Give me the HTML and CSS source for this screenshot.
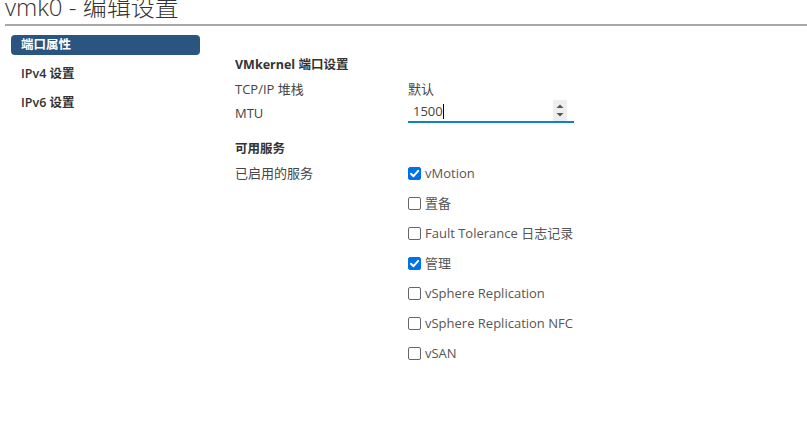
FILE: index.html
```html
<!DOCTYPE html>
<html>
<head>
<meta charset="utf-8">
<link rel="stylesheet" href="styles.css">
</head>
<body>
<div class="page">
  <h1 class="title">vmk0 - 编辑设置</h1>
  <div class="body">
    <nav class="side">
      <div class="nav-item active">端口属性</div>
      <div class="nav-item">IPv4 设置</div>
      <div class="nav-item">IPv6 设置</div>
    </nav>
    <main class="main">
      <div class="section-title">VMkernel 端口设置</div>
      <div class="row"><div class="label">TCP/IP 堆栈</div><div class="value">默认</div></div>
      <div class="row"><div class="label">MTU</div>
        <div class="value">
          <div class="num-input">
            <span class="num-text">1500</span><span class="caret"></span>
            <div class="spinner">
              <svg width="14" height="21" viewBox="0 0 14 21"><path d="M3.5 8 L7 4.5 L10.5 8 Z" fill="#555"/><path d="M3.5 13 L7 16.5 L10.5 13 Z" fill="#555"/></svg>
            </div>
          </div>
        </div>
      </div>
      <div class="section-title second">可用服务</div>
      <div class="row services">
        <div class="label">已启用的服务</div>
        <div class="value checks">
          <label class="check"><span class="box on"><svg width="13" height="13" viewBox="0 0 13 13"><path d="M3 6.8 L5.5 9.2 L10.2 3.8" stroke="#fff" stroke-width="2" fill="none" stroke-linecap="round" stroke-linejoin="round"/></svg></span>vMotion</label>
          <label class="check"><span class="box"></span>置备</label>
          <label class="check"><span class="box"></span>Fault Tolerance 日志记录</label>
          <label class="check"><span class="box on"><svg width="13" height="13" viewBox="0 0 13 13"><path d="M3 6.8 L5.5 9.2 L10.2 3.8" stroke="#fff" stroke-width="2" fill="none" stroke-linecap="round" stroke-linejoin="round"/></svg></span>管理</label>
          <label class="check"><span class="box"></span>vSphere Replication</label>
          <label class="check"><span class="box"></span>vSphere Replication NFC</label>
          <label class="check"><span class="box"></span>vSAN</label>
        </div>
      </div>
    </main>
  </div>
</div>
</body>
</html>
```

FILE: styles.css
```css
* { box-sizing: border-box; }
html, body { margin: 0; padding: 0; background: #fff; }
body {
  font-family: "Open Sans", "Noto Sans CJK SC", sans-serif;
  font-size: 13px;
  color: #454545;
  overflow: hidden;
}
.page { width: 807px; height: 438px; padding-left: 5px; }
.title {
  margin: -9px 0 0 0;
  height: 35px;
  font-size: 24px;
  font-weight: 300;
  line-height: 32px;
  color: #333;
  border-bottom: 2px solid #a8a8a8;
  white-space: nowrap;
}
.body { display: flex; padding-top: 9px; }
.side { width: 189px; margin-left: 6px; }
.nav-item {
  height: 20px;
  line-height: 20px;
  padding-left: 10px;
  margin-bottom: 9px;
  font-size: 12.5px;
  font-weight: 600;
  color: #333;
  border-radius: 4px;
}
.nav-item.active { background: #2b5581; color: #fff; font-weight: 700; }
.main { margin-left: 35px; padding-top: 18px; }
.section-title { font-weight: 700; color: #333; height: 24px; line-height: 24px; font-size: 12.5px; }
.section-title.second { margin-top: 12px; }
.row { display: flex; height: 24px; line-height: 24px; }
.label { width: 173px; }
.value { position: relative; }
.num-input {
  position: relative;
  width: 166px;
  height: 24px;
  border-bottom: 2px solid #0b84c6;
  padding-left: 5px;
  margin-top: -2px;
  line-height: 24px;
  color: #444;
}
.caret { display: inline-block; width: 1px; height: 15px; background: #000; vertical-align: -3px; }
.spinner {
  position: absolute;
  right: 7px;
  top: 1px;
  width: 14px;
  height: 21px;
  background: #eee;
}
.spinner svg { display: block; }
.services { height: auto; align-items: flex-start; }
.checks { display: flex; flex-direction: column; }
.check { display: flex; align-items: center; height: 24px; margin-bottom: 6px; color: #565656; }
.box {
  width: 13px; height: 13px;
  border: 1px solid #666;
  border-radius: 2px;
  margin-right: 4px;
  background: #fff;
  flex: none;
}
.box.on { background: #0072e6; border-color: #0072e6; }
.box svg { display: block; margin: -1px; }
```
